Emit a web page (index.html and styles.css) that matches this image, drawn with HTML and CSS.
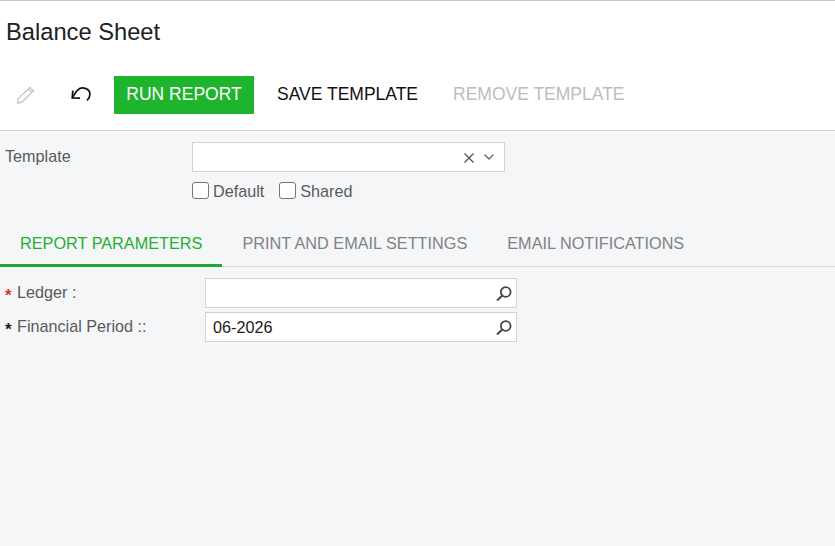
FILE: index.html
```html
<!DOCTYPE html>
<html lang="en">
<head>
  <meta charset="UTF-8">
  <title>Balance Sheet</title>
  <link rel="stylesheet" href="styles.css">
</head>
<body>

<div class="page-header">
  <h1>Balance Sheet</h1>
  <div class="toolbar">
    <span class="tool-icon tool-edit">
      <svg width="20" height="20" viewBox="0 0 20 20" fill="none" stroke="#c8c8c8" stroke-width="1.4">
        <path d="M2.500 18 3.200 13.500 15 2.500 18.500 5.700 7 17z"/>
        <path d="M13.300 4 16.800 7.300"/>
      </svg>
    </span>
    <span class="tool-icon tool-undo">
      <svg width="22" height="20" viewBox="0 0 22 20" fill="none" stroke="#111" stroke-width="1.7">
        <path d="M2.800 5.500 2.200 13 10 13.200"/>
        <path d="M2.800 12.500C5.500 6.500 8.500 3 12 2.800C16.500 2.600 20 5.500 20 9C20 11.500 18.500 14 17 15.500"/>
      </svg>
    </span>
    <button class="btn-run">RUN REPORT</button>
    <button class="btn-text">SAVE TEMPLATE</button>
    <button class="btn-text btn-disabled">REMOVE TEMPLATE</button>
  </div>
</div>

<div class="template-form">
  <label class="form-label">Template</label>
  <div class="template-col">
    <div class="field template-field">
      <svg class="clear-icon" width="12" height="12" viewBox="0 0 12 12" stroke="#555" stroke-width="1.300" fill="none">
        <path d="M1.500 1.500 10.500 10.500M10.500 1.500 1.500 10.500"/>
      </svg>
      <svg class="chevron-icon" width="12" height="8" viewBox="0 0 12 8" stroke="#666" stroke-width="1.300" fill="none">
        <path d="M1.500 1.500 6 6 10.500 1.500"/>
      </svg>
    </div>
    <div class="check-row">
      <label class="check"><span class="box"></span>Default</label>
      <label class="check"><span class="box"></span>Shared</label>
    </div>
  </div>
</div>

<div class="tabs">
  <a class="tab active">REPORT PARAMETERS</a>
  <a class="tab">PRINT AND EMAIL SETTINGS</a>
  <a class="tab">EMAIL NOTIFICATIONS</a>
</div>

<div class="params">
  <div class="param-row">
    <span class="star star-red">*</span>
    <label class="param-label">Ledger :</label>
    <div class="field lookup-field">
      <svg class="search-icon" width="16" height="16" viewBox="0 0 16 16" fill="none" stroke="#444">
        <circle cx="9.700" cy="7" r="4.900" stroke-width="1.800"/>
        <path d="M6 10.700 1 15.500" stroke-width="2"/>
      </svg>
    </div>
  </div>
  <div class="param-row">
    <span class="star">*</span>
    <label class="param-label">Financial Period ::</label>
    <div class="field lookup-field">
      <span class="field-value">06-2026</span>
      <svg class="search-icon" width="16" height="16" viewBox="0 0 16 16" fill="none" stroke="#444">
        <circle cx="9.700" cy="7" r="4.900" stroke-width="1.800"/>
        <path d="M6 10.700 1 15.500" stroke-width="2"/>
      </svg>
    </div>
  </div>
</div>

</body>
</html>
```

FILE: styles.css
```css
* {
    box-sizing: border-box;
}
body {
    font-family: 'Liberation Sans', Arial, sans-serif;
    margin: 0;
    min-height: 546px;
    background: #f4f6f8;
    color: #5a5a5a;
    font-size: 16.2px;
    overflow: hidden;
}
.page-header {
    height: 131px;
    background: #fff;
    border-top: 1px solid #c8c8c8;
    border-bottom: 1px solid #d2d4d6;
}
.page-header h1 {
    margin: 0;
    padding: 18px 0 0 6px;
    height: 75px;
    font-size: 23.7px;
    line-height: 27px;
    font-weight: 400;
    color: #212121;
}
.toolbar {
    display: flex;
    align-items: center;
    height: 38px;
}
.tool-icon {
    display: flex;
    align-items: center;
}
.tool-edit {
    margin-left: 15px;
    width: 55px;
}
.tool-undo {
    width: 44px;
}
.toolbar button {
    font-family: inherit;
    font-size: 17.5px;
    border: none;
    height: 38px;
    padding: 0 0 2px;
    background: none;
}
.toolbar .btn-run {
    width: 140px;
    background: #1fb42d;
    color: #fff;
}
.toolbar .btn-text {
    margin-left: 23px;
    margin-right: 12px;
    color: #111;
}
.toolbar .btn-disabled {
    color: #bdbdbd;
}
.template-form {
    display: flex;
    padding: 11px 0 0 5px;
    height: 89px;
}
.form-label {
    width: 187px;
    line-height: 28px;
}
.field {
    position: relative;
    display: flex;
    align-items: center;
    background: #fff;
    border: 1px solid #d0d2d4;
    height: 30px;
}
.template-field {
    width: 313px;
}
.clear-icon {
    position: absolute;
    right: 29px;
    top: 9px;
}
.chevron-icon {
    position: absolute;
    right: 9px;
    top: 10px;
}
.check-row {
    display: flex;
    gap: 15px;
    margin-top: 10px;
}
.check {
    display: flex;
    align-items: flex-start;
    gap: 4px;
    line-height: 18px;
}
.box {
    width: 17px;
    height: 17px;
    background: #fff;
    border: 1px solid #767676;
    border-radius: 3px;
}
.tabs {
    display: flex;
    height: 47px;
    border-bottom: 1px solid #d8dadc;
}
.tab {
    padding: 0 20px;
    line-height: 46px;
    height: 47px;
    color: #808285;
    font-size: 16.25px;
}
.tab.active {
    color: #22b02f;
    border-bottom: 3px solid #22a82f;
}
.params {
    padding-top: 11px;
}
.param-row {
    display: flex;
    align-items: center;
    height: 30px;
    margin-bottom: 4px;
    padding-left: 5px;
}
.star {
    width: 12px;
    font-size: 17px;
    font-weight: 700;
    color: #222;
    padding-top: 5px;
}
.star-red {
    color: #d8353a;
}
.param-label {
    width: 188px;
    padding-bottom: 2px;
}
.lookup-field {
    width: 312px;
}
.field-value {
    padding-left: 7px;
    color: #212121;
}
.search-icon {
    position: absolute;
    right: 4px;
    top: 6px;
}
```
